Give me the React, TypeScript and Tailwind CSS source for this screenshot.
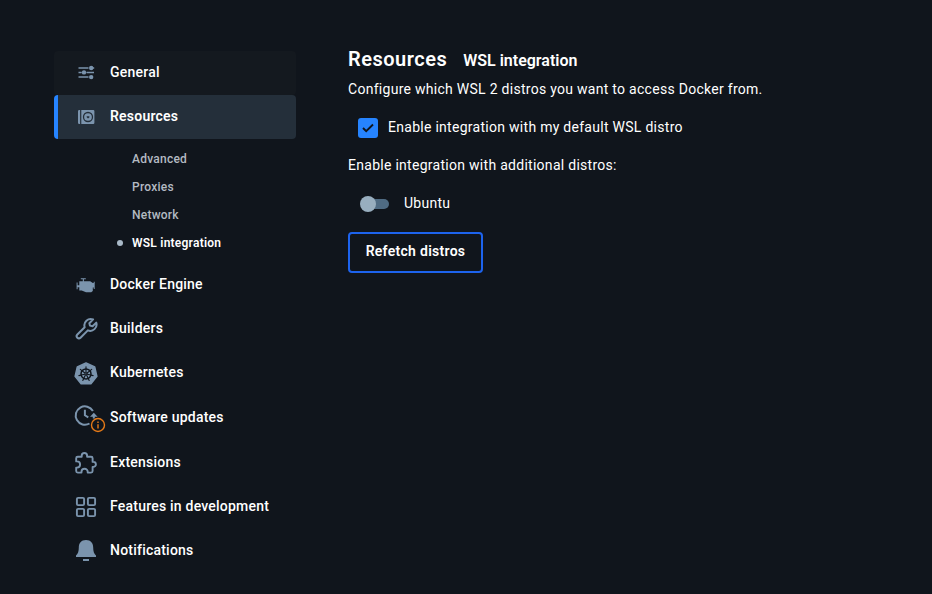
import type { ReactNode } from "react";

function GeneralIcon() {
  return (
    <svg viewBox="0 0.6 24 24" className="size-6" fill="currentColor">
      <path d="M4.500 6.900h10v1.500h-10zM4.500 11.300h3.200v1.500H4.500zM12.500 11.300H20v1.500h-7.500zM4.500 15.900h10v1.500h-10zM18 6.900h2.200v1.500H18z" />
      <circle cx="17.200" cy="7.600" r="2.200" />
      <circle cx="10" cy="12" r="2.200" />
      <circle cx="17.200" cy="16.700" r="2.200" />
    </svg>
  );
}

function ResourcesIcon() {
  return (
    <svg viewBox="0 0 24 24" className="size-6" fill="currentColor">
      <path d="M5.200 5h.9v14h-.9a1.200 1.200 0 0 1-1.200-1.200V6.200A1.200 1.200 0 0 1 5.200 5zM7.300 5h11.900a1.200 1.200 0 0 1 1.200 1.200v11.600a1.200 1.200 0 0 1-1.200 1.200H7.300z" />
      <circle cx="14" cy="12" r="4.500" fill="none" stroke="#242f3a" strokeWidth="1.300" />
      <path d="M12.700 11.200h2.600l.2 1-1.500 1.200-1.300-1.200z" fill="#242f3a" />
    </svg>
  );
}

function EngineIcon() {
  return (
    <svg viewBox="0 0 24 24" className="size-6" fill="currentColor">
      <path d="M6.800 5.200h5v1.100H9.900v2h6.300l2.600 1.700h.9V8.800h1v7.200h-1v-1.500h-.9v3.500l-1.600 1.200h-5.200l-4.300-1.700H5.300v-3.300H3.600v2H2.600V9.500h1v2.700h1.700V8.300h3.500v-2h-2z" />
    </svg>
  );
}

function WrenchIcon() {
  return (
    <svg viewBox="0 0 24 24" className="size-6" fill="none" stroke="currentColor" strokeWidth="1.900" strokeLinecap="round" strokeLinejoin="round">
      <g transform="translate(-.5 -.9) scale(1.060)">
        <path d="M15 6.700l.5 2.300 2.500.6 3.470-3.470a6 6 0 0 1-7.940 7.340l-6.910 6.910a2.120 2.120 0 0 1-3-3l6.910-6.910a6 6 0 0 1 7.940-7.340z" />
      </g>
    </svg>
  );
}

function KubernetesIcon() {
  return (
    <svg viewBox="0 -0.6 24 24" className="size-6 overflow-visible">
      <path d="M12 1.300l8.700 4.100 2.200 9.300-6 7.500H7.100l-6-7.500 2.200-9.300z" fill="currentColor" stroke="currentColor" strokeWidth="1.500" strokeLinejoin="round" />
      <g stroke="#10151c" fill="none" strokeLinecap="round">
        <circle cx="12" cy="12.300" r="5" strokeWidth="1.500" />
        <path strokeWidth="1.100" d="M12 5.100v5.800M17.700 7.800l-4.600 3.600M19.100 14l-5.700-1.400M15.200 18.800l-2.600-5.300M8.800 18.800l2.600-5.300M4.900 14l5.700-1.400M6.300 7.800l4.600 3.600" />
        <circle cx="12" cy="12.300" r="1" strokeWidth=".8" />
      </g>
    </svg>
  );
}

function UpdatesIcon() {
  return (
    <span className="relative -top-px block size-6">
      <svg viewBox="0 0.500 24 24" className="size-6 overflow-visible" fill="none" stroke="currentColor" strokeWidth="2">
        <path d="M15.500 19A9.200 9.200 0 1 1 18.900 6.500M10.900 5.200v5.600l3.400 2" />
        <path d="M19.800 14V10.500" />
        <path d="M16 12.200l3.800-3.900 3.800 3.900z" fill="currentColor" stroke="none" />
      </svg>
      <svg viewBox="0 0 16 16" className="absolute left-4 top-[12px] size-4 text-[#e57a18]" fill="none" stroke="currentColor" strokeWidth="1.400">
        <circle cx="8" cy="8" r="6.500" fill="#10151c" />
        <path d="M8 7.200v4.200M8 4.600v1.500" strokeWidth="1.400" />
      </svg>
    </span>
  );
}

function PuzzleIcon() {
  return (
    <svg viewBox="0 0 24 24" className="size-6" fill="none" stroke="currentColor" strokeWidth="1.900" strokeLinejoin="round">
      <path d="M3.700 5.700h4v-1a2.700 2.700 0 0 1 5.400 0v1h4a1.500 1.500 0 0 1 1.500 1.500v3.700h.8a2.500 2.500 0 0 1 0 5h-.8v4.200a1.500 1.500 0 0 1-1.500 1.500h-3.400v-.8a3.100 3.100 0 0 0-6.200 0v.8H3.700a1.500 1.500 0 0 1-1.500-1.500v-3.500h.8a3.100 3.100 0 0 0 0-6.200h-.8V7.200a1.500 1.500 0 0 1 1.500-1.500z" />
    </svg>
  );
}

function GridIcon() {
  return (
    <svg viewBox="0 0 24 24" className="size-6" fill="none" stroke="currentColor" strokeWidth="1.900">
      <rect x="2.900" y="2.900" width="7.200" height="7.200" rx="1.200" />
      <rect x="13.900" y="2.900" width="7.200" height="7.200" rx="1.200" />
      <rect x="2.900" y="13.900" width="7.200" height="7.200" rx="1.200" />
      <rect x="13.900" y="13.900" width="7.200" height="7.200" rx="1.200" />
    </svg>
  );
}

function BellIcon() {
  return (
    <svg viewBox="0 0 24 24" className="size-6" fill="currentColor">
      <path d="M12 1c-4.900 0-7.200 3.200-7.200 7.500 0 3.700-.7 6.100-2.800 8v1.500h20v-1.500c-2.100-1.900-2.800-4.300-2.800-8C19.200 4.200 16.900 1 12 1zM9 20h6v1.900H9z" />
    </svg>
  );
}

function NavItem({ icon, label, className = "h-11" }: { icon: ReactNode; label: string; className?: string }) {
  return (
    <li className={`flex items-center pl-5 text-[14px] font-medium tracking-[0.22px] ${className}`}>
      <span className="mt-[2px] size-6 shrink-0 text-[#7b94ad]">{icon}</span>
      <span className="ml-3 whitespace-nowrap">{label}</span>
    </li>
  );
}

function SubItem({ label, active = false }: { label: string; active?: boolean }) {
  return (
    <li className={`flex h-7 items-center pl-[63px] text-[12px] tracking-[0.24px] ${active ? "font-semibold text-white" : "font-medium text-[#b4bac2]"}`}>
      <span className={`mr-[9px] size-1.5 rounded-full ${active ? "bg-[#a9b9c8]" : ""}`} />
      {label}
    </li>
  );
}

export default function App() {
  return (
    <div className="flex h-[594px] w-[932px] overflow-hidden bg-[#10151c] font-[Roboto,sans-serif] text-white">
      <nav className="ml-[54px] mt-[51px] w-[242px] shrink-0">
        <ul>
          <NavItem icon={<GeneralIcon />} label="General" className="h-11 rounded bg-[#14191f] pb-[2px]" />
          <NavItem icon={<ResourcesIcon />} label="Resources" className="h-11 rounded border-l-4 border-[#2684ff] bg-[#242f3a] !pl-4 pb-[2px] !font-semibold" />
          <li className="pb-[5px] pt-[6px]">
            <ul>
              <SubItem label="Advanced" />
              <SubItem label="Proxies" />
              <SubItem label="Network" />
              <SubItem label="WSL integration" active />
            </ul>
          </li>
          <NavItem icon={<EngineIcon />} label="Docker Engine" />
          <NavItem icon={<WrenchIcon />} label="Builders" />
          <NavItem icon={<KubernetesIcon />} label="Kubernetes" />
          <NavItem icon={<UpdatesIcon />} label="Software updates" className="h-[46px]" />
          <NavItem icon={<PuzzleIcon />} label="Extensions" />
          <NavItem icon={<GridIcon />} label="Features in development" />
          <NavItem icon={<BellIcon />} label="Notifications" />
        </ul>
      </nav>
      <main className="ml-[52px] mt-[46px] text-[14px] tracking-[0.28px]">
        <header className="flex items-baseline">
          <h1 className="text-[20px] font-semibold leading-[26px] tracking-[0.5px]">Resources</h1>
          <h2 className="ml-4 text-[16px] font-semibold tracking-normal">WSL integration</h2>
        </header>
        <p className="mt-[6px] leading-5">Configure which WSL 2 distros you want to access Docker from.</p>
        <label className="ml-[10px] mt-[18px] flex h-5 items-center">
          <span className="mt-px flex size-5 items-center justify-center rounded-[3px] bg-[#2684ff]">
            <svg viewBox="0 0 20 20" className="size-5" fill="none" stroke="#10151c" strokeWidth="1.900">
              <path d="M5 10l3.200 3.200 6.800-6.700" />
            </svg>
          </span>
          <span className="ml-[10px]">Enable integration with my default WSL distro</span>
        </label>
        <p className="mt-[18px] leading-5">Enable integration with additional distros:</p>
        <div className="ml-3 mt-[18px] flex h-5 items-center">
          <span className="mt-px flex h-4 w-[29px] items-center">
            <span className="z-10 size-4 shrink-0 rounded-full bg-[#98aebf]" />
            <span className="-ml-1 h-[10px] w-[17px] rounded-r-full bg-[#4f6b83]" />
          </span>
          <span className="ml-[15px]">Ubuntu</span>
        </div>
        <button className="mt-[19px] flex h-[41px] w-[135px] items-center justify-center rounded border-2 border-[#1d63ed] pb-[3px] font-semibold tracking-[0.285px]">
          Refetch distros
        </button>
      </main>
    </div>
  );
}
